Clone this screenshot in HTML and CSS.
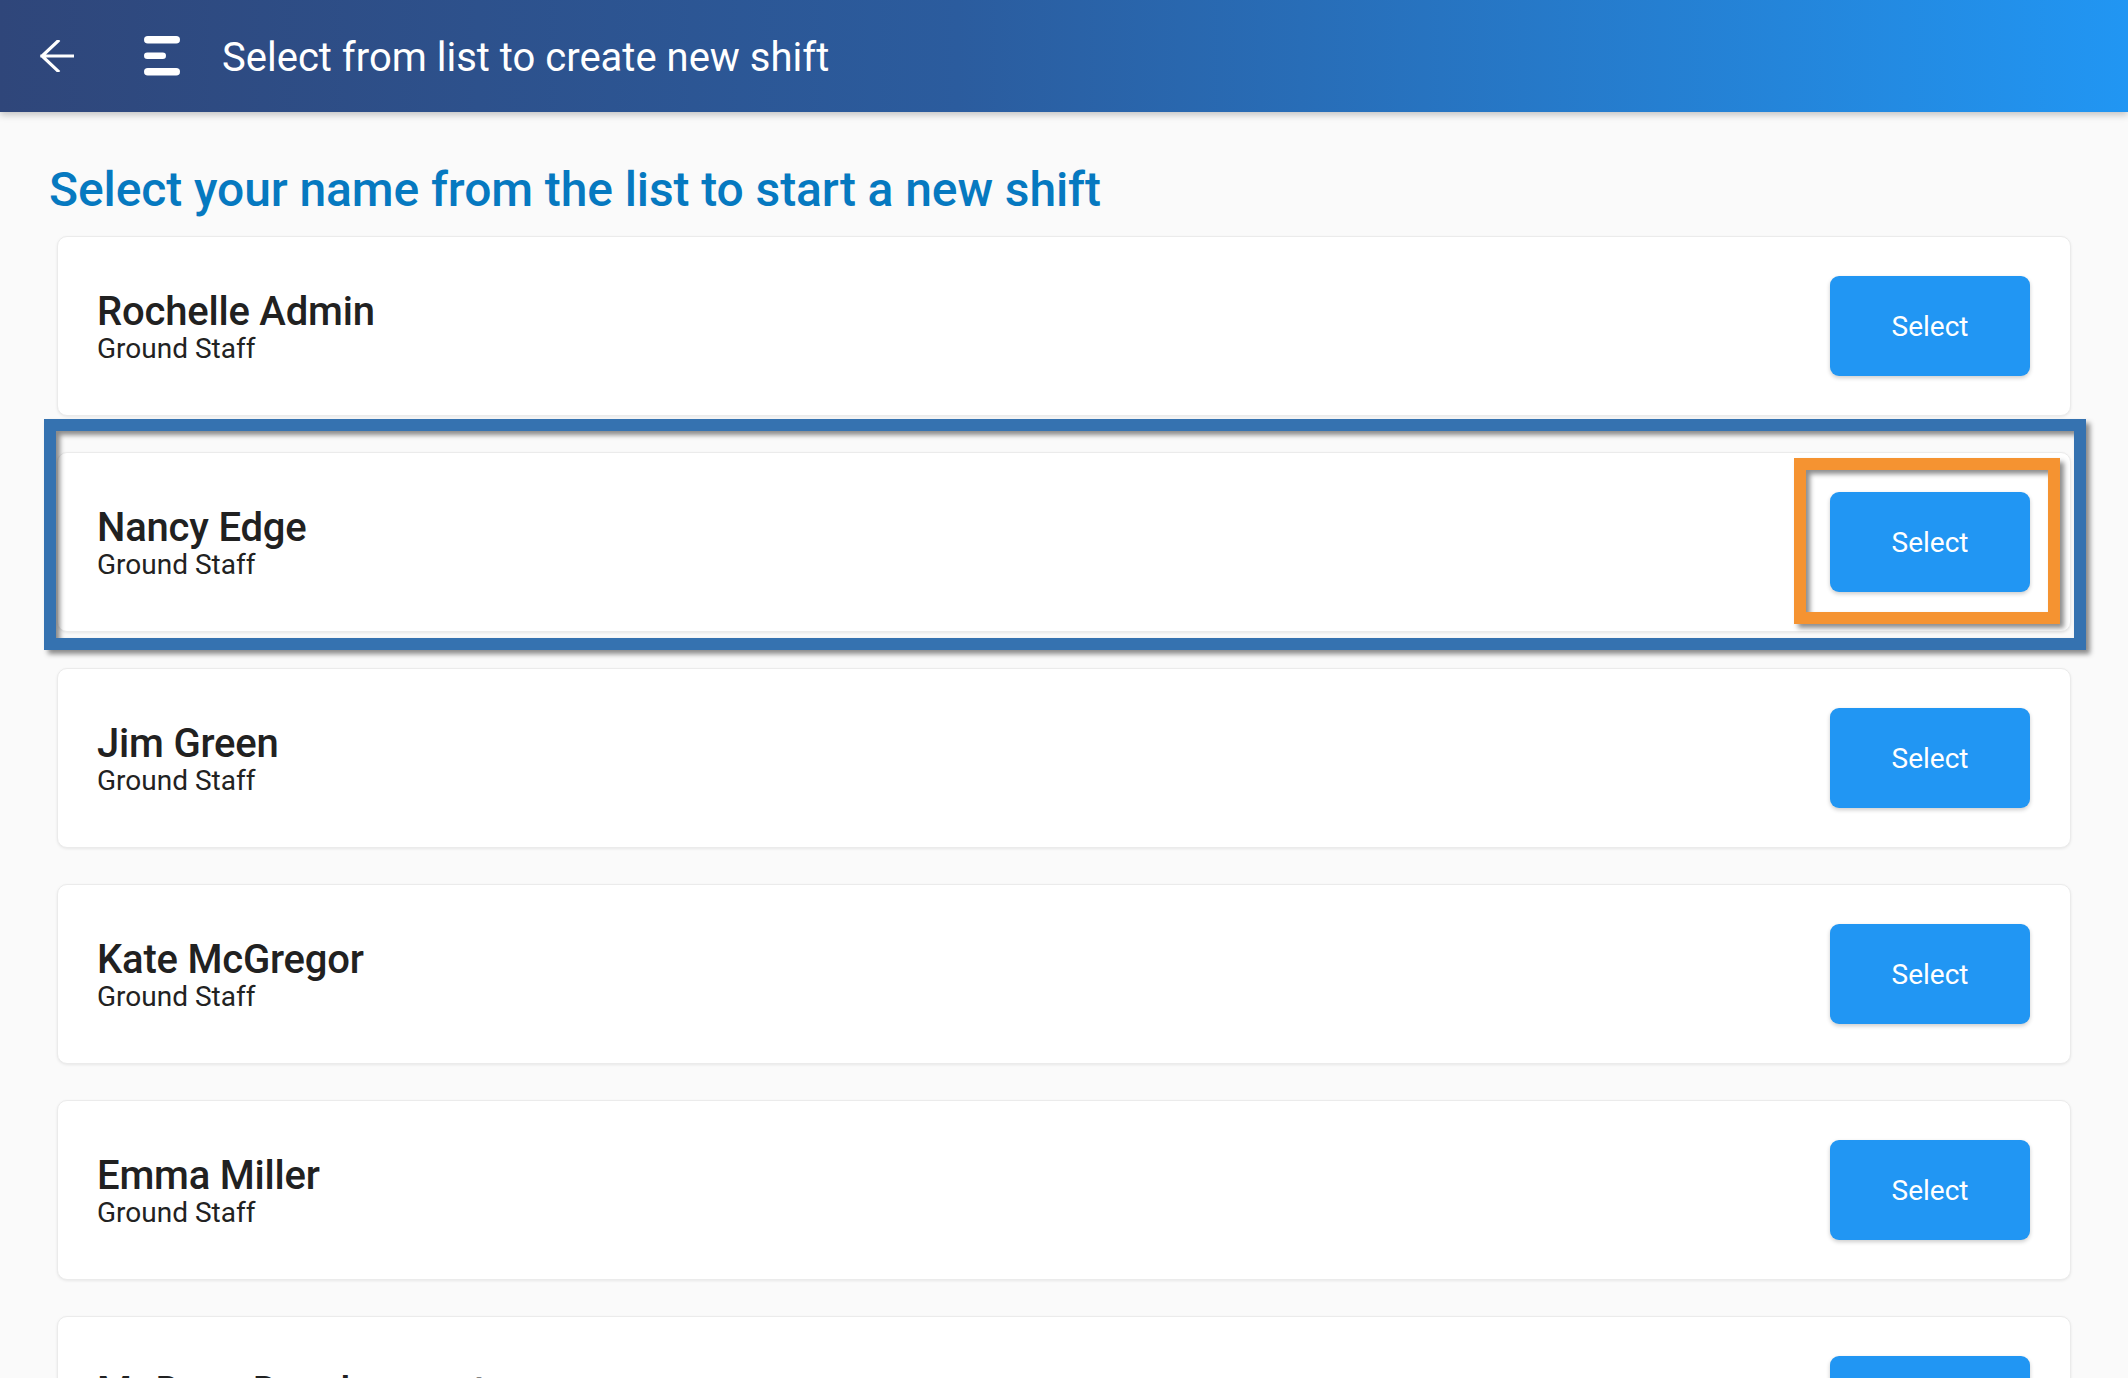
FILE: index.html
```html
<!DOCTYPE html>
<html lang="en">
<head>
<meta charset="utf-8">
<title>Select from list to create new shift</title>
<link rel="stylesheet" href="styles.css">
</head>
<body>
<header class="appbar">
  <button class="icon-btn back" aria-label="Back">
    <svg width="34" height="32" viewBox="0 0 34 32"><path d="M33 16 H2 M18 1 L2 16 L18 31" fill="none" stroke="#fff" stroke-width="3.2" stroke-linecap="square" stroke-linejoin="miter"/></svg>
  </button>
  <button class="icon-btn menu" aria-label="Menu">
    <svg width="36" height="40" viewBox="0 0 36 40"><rect x="0" y="0" width="36" height="7.5" rx="3.75" fill="#fff"/><rect x="0" y="16.5" width="22" height="6.5" rx="3.25" fill="#fff"/><rect x="0" y="32" width="36" height="7.5" rx="3.75" fill="#fff"/></svg>
  </button>
  <h1 class="appbar-title">Select from list to create new shift</h1>
</header>

<main class="content">
  <h2 class="heading">Select your name from the list to start a new shift</h2>
  <ul class="staff-list">
    <li class="card">
      <div class="person"><div class="name">Rochelle Admin</div><div class="role">Ground Staff</div></div>
      <div class="action"><button class="select-btn">Select</button></div>
    </li>
    <li class="card highlighted">
      <div class="person"><div class="name">Nancy Edge</div><div class="role">Ground Staff</div></div>
      <div class="action"><button class="select-btn">Select</button><span class="frame frame-orange"></span></div>
      <span class="frame frame-blue"></span>
    </li>
    <li class="card">
      <div class="person"><div class="name">Jim Green</div><div class="role">Ground Staff</div></div>
      <div class="action"><button class="select-btn">Select</button></div>
    </li>
    <li class="card">
      <div class="person"><div class="name">Kate McGregor</div><div class="role">Ground Staff</div></div>
      <div class="action"><button class="select-btn">Select</button></div>
    </li>
    <li class="card">
      <div class="person"><div class="name">Emma Miller</div><div class="role">Ground Staff</div></div>
      <div class="action"><button class="select-btn">Select</button></div>
    </li>
    <li class="card">
      <div class="person"><div class="name">Mr Dave Development</div><div class="role">Ground Staff</div></div>
      <div class="action"><button class="select-btn">Select</button></div>
    </li>
  </ul>
</main>
</body>
</html>
```
FILE: styles.css
```css
html, body {
  margin: 0;
  padding: 0;
  height: 100%;
  overflow: hidden;
}
body {
  background: #fafafa;
  font-family: Roboto, "Liberation Sans", Arial, sans-serif;
  color: #212121;
}

.appbar {
  position: relative;
  z-index: 2;
  height: 112px;
  display: flex;
  align-items: center;
  padding-left: 40px;
  background: linear-gradient(to right, #2f467a 0%, #2b5c9e 45%, #2196f3 100%);
  box-shadow: 0 3px 7px rgba(0, 0, 0, 0.22);
}
.icon-btn {
  background: none;
  border: 0;
  padding: 0;
  margin: 0;
  display: flex;
  align-items: center;
}
.back { margin-right: 70px; }
.menu { margin-right: 42px; }
.appbar-title {
  margin: 3px 0 0 0;
  font-size: 40px;
  font-weight: 400;
  color: #fff;
  letter-spacing: 0;
}

.content {
  padding: 0 49px;
}
.heading {
  margin: 48px 0 16px 0;
  font-size: 48px;
  line-height: 60px;
  font-weight: 500;
  color: #0679c0;
  letter-spacing: -0.1px;
}
.staff-list {
  list-style: none;
  margin: 0;
  padding: 0 8px;
  display: flex;
  flex-direction: column;
  gap: 36px;
}
.card {
  position: relative;
  box-sizing: border-box;
  height: 180px;
  display: flex;
  align-items: center;
  justify-content: space-between;
  padding: 0 40px 0 39px;
  background: #fff;
  border: 1px solid #ebebeb;
  border-radius: 10px;
  box-shadow: 0 1px 3px rgba(0, 0, 0, 0.08);
}
.person {
  display: flex;
  flex-direction: column;
  padding-top: 2px;
}
.name {
  font-size: 40px;
  line-height: 44px;
  font-weight: 500;
  color: #212121;
  letter-spacing: -0.2px;
}
.role {
  font-size: 28px;
  line-height: 30px;
  font-weight: 400;
  color: #222;
}
.action {
  position: relative;
  display: flex;
}
.select-btn {
  width: 200px;
  height: 100px;
  border: 0;
  border-radius: 9px;
  background: #2196f3;
  color: #fff;
  font-family: Roboto, "Liberation Sans", Arial, sans-serif;
  font-size: 28px;
  font-weight: 400;
  box-shadow: 0 2px 4px rgba(0, 0, 0, 0.2);
}

.frame {
  position: absolute;
  pointer-events: none;
  border: 12px solid;
  box-shadow: 4px 4px 5px rgba(0, 0, 0, 0.45), inset 4px 4px 5px rgba(0, 0, 0, 0.45);
}
.frame-blue {
  border-color: #3572b0;
  top: -34px;
  left: -14px;
  right: -16px;
  bottom: -19px;
}
.frame-orange {
  border-color: #f59331;
  top: -34px;
  left: -36px;
  right: -30px;
  bottom: -32px;
  z-index: 1;
}
```
